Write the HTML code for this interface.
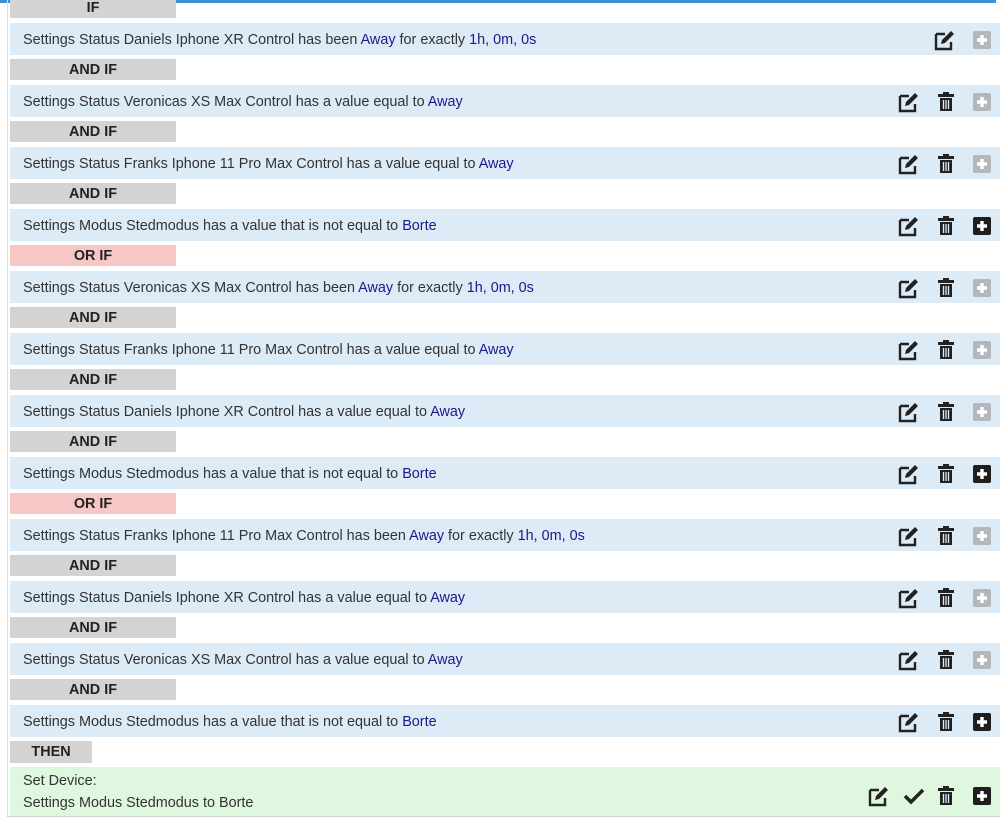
<!DOCTYPE html>
<html><head><meta charset="utf-8"><style>
body{margin:0;width:1000px;height:821px;overflow:hidden;background:#fff;font-family:"Liberation Sans",Arial,sans-serif;position:relative}
.top{position:absolute;left:0;top:0;width:996px;height:3px;background:#3d8fd6}
.lb{position:absolute;left:7px;top:0;width:1px;height:816px;background:#dcdcdc}
.bb{position:absolute;left:7px;top:816px;width:993px;height:1px;background:#d0d0d0}
.lab{position:absolute;left:10px;width:166px;height:21px;background:#d3d3d3;font-weight:bold;font-size:14.4px;text-align:center;line-height:22px;color:#222}
.lab.or{background:#f7c7c5}
.row{position:absolute;left:10px;width:990px;height:32px;background:#ddebf7;font-size:14.4px;color:#333;line-height:30px;white-space:nowrap}
.row span.t{position:absolute;left:13px;top:2px}
b{font-weight:normal;color:#1a1a8a}
svg{position:absolute}
</style></head><body>
<div class="top"></div><div class="lb"></div>
<svg width="0" height="0" style="position:absolute">
<defs>
<g id="ed"><path d="M2 5h9M2 5v15h15v-7" fill="none" stroke="#222" stroke-width="2.4"/><path d="M7 15l1-4 9-9 3 3-9 9z" fill="#222"/></g>
<g id="tr"><rect x="2" y="3" width="16" height="3" fill="#222"/><rect x="7" y="1" width="6" height="3" fill="#222"/><path d="M4 7h12v13H4z" fill="#222"/><path d="M7.5 9v9M10 9v9M12.5 9v9" stroke="#ddebf7" stroke-width="1.3"/></g>
<g id="pl"><rect x="1" y="1" width="18" height="18" rx="2"/><path d="M10 5v10M5 10h10" stroke="#fff" stroke-width="3.4"/></g>
</defs></svg>
<div id="c"></div>
<script>
const rows=[
['IF',0,'Settings Status Daniels Iphone XR Control has been <b>Away</b> for exactly <b>1h, 0m, 0s</b>',2,0],
['AND IF',0,'Settings Status Veronicas XS Max Control has a value equal to <b>Away</b>',1,0],
['AND IF',0,'Settings Status Franks Iphone 11 Pro Max Control has a value equal to <b>Away</b>',1,0],
['AND IF',0,'Settings Modus Stedmodus has a value that is not equal to <b>Borte</b>',1,1],
['OR IF',1,'Settings Status Veronicas XS Max Control has been <b>Away</b> for exactly <b>1h, 0m, 0s</b>',1,0],
['AND IF',0,'Settings Status Franks Iphone 11 Pro Max Control has a value equal to <b>Away</b>',1,0],
['AND IF',0,'Settings Status Daniels Iphone XR Control has a value equal to <b>Away</b>',1,0],
['AND IF',0,'Settings Modus Stedmodus has a value that is not equal to <b>Borte</b>',1,1],
['OR IF',1,'Settings Status Franks Iphone 11 Pro Max Control has been <b>Away</b> for exactly <b>1h, 0m, 0s</b>',1,0],
['AND IF',0,'Settings Status Daniels Iphone XR Control has a value equal to <b>Away</b>',1,0],
['AND IF',0,'Settings Status Veronicas XS Max Control has a value equal to <b>Away</b>',1,0],
['AND IF',0,'Settings Modus Stedmodus has a value that is not equal to <b>Borte</b>',1,1]];
let h='';
rows.forEach((r,i)=>{
 const lt=-3+62*i, rt=23+62*i;
 h+=`<div class="lab${r[1]?' or':''}" style="top:${lt}px">${r[0]}</div>`;
 h+=`<div class="row" style="top:${rt}px"><span class="t">${r[2]}</span></div>`;
 const iy=rt+6;
 if(r[3]==2){h+=`<svg style="left:934px;top:${iy}px" width="22" height="22"><use href="#ed"/></svg>`}
 else{h+=`<svg style="left:898px;top:${iy}px" width="22" height="22"><use href="#ed"/></svg><svg style="left:936px;top:${iy}px" width="20" height="22"><use href="#tr"/></svg>`}
 h+=`<svg style="left:972px;top:${iy+1}px" width="20" height="20"><use href="#pl" fill="${r[4]?'#1e1e1e':'#b4b7bb'}"/></svg>`;
});
h+=`<div class="lab" style="top:741px;width:82px;height:22px;line-height:22px">THEN</div>`;
h+=`<div class="row" style="top:767px;height:49px;background:#dff7df;line-height:22px"><span class="t" style="top:3px">Set Device:<br>Settings Modus Stedmodus to Borte</span></div>`;
h+=`<svg style="left:868px;top:785px" width="22" height="22"><use href="#ed"/></svg>`;
h+=`<svg style="left:903px;top:786px" width="22" height="20"><path d="M2 10l6 6L20 4" fill="none" stroke="#222" stroke-width="3.5"/></svg>`;
h+=`<svg style="left:936px;top:785px" width="20" height="22"><use href="#tr"/></svg>`;
h+=`<svg style="left:972px;top:786px" width="20" height="20"><use href="#pl" fill="#1e1e1e"/></svg>`;
document.getElementById('c').innerHTML=h;
</script>
<div class="bb"></div>
</body></html>
